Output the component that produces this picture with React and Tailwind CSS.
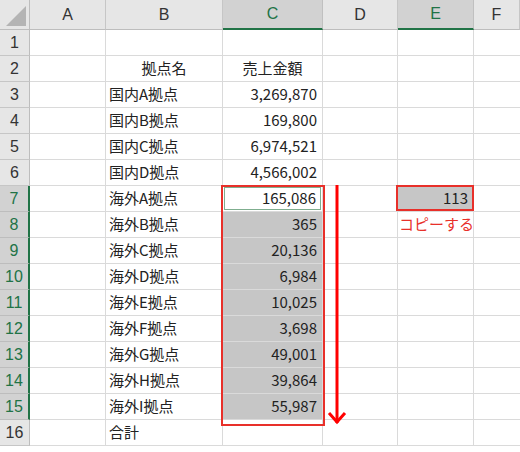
import React from "react";

const rows = [
  ["", ""],
  ["拠点名", "売上金額"],
  ["国内A拠点", "3,269,870"],
  ["国内B拠点", "169,800"],
  ["国内C拠点", "6,974,521"],
  ["国内D拠点", "4,566,002"],
  ["海外A拠点", "165,086"],
  ["海外B拠点", "365"],
  ["海外C拠点", "20,136"],
  ["海外D拠点", "6,984"],
  ["海外E拠点", "10,025"],
  ["海外F拠点", "3,698"],
  ["海外G拠点", "49,001"],
  ["海外H拠点", "39,864"],
  ["海外I拠点", "55,987"],
  ["合計", ""],
];

const font = { fontFamily: '"Noto Sans CJK JP", "Liberation Sans", sans-serif' };

function CCell({ n, value }) {
  if (n === 2) {
    return <div className="flex items-center justify-center border-r border-b border-[#dadada]">{value}</div>;
  }
  if (n === 7) {
    return (
      <div className="flex p-px border-r border-b border-[#dadada]">
        <div className="flex-1 flex items-center justify-end pr-[4px] border border-[#7fae8f] bg-white">{value}</div>
      </div>
    );
  }
  const sel = n >= 8 && n <= 15;
  return (
    <div
      className={
        sel
          ? "flex items-center justify-end pr-[5px] bg-[#c6c6c6] border-r border-b border-[#dadada]"
          : "flex items-center justify-end pr-[5px] border-r border-b border-[#dadada]"
      }
    >
      {value}
    </div>
  );
}

function ECell({ n }) {
  if (n === 7) {
    return (
      <div className="flex items-center justify-end pr-[5px] bg-[#c6c6c6] border-r border-b border-[#dadada]">113</div>
    );
  }
  if (n === 8) {
    return (
      <div className="flex items-center pl-[1px] whitespace-nowrap text-[#e8302a] border-r border-b border-[#dadada]">
        コピーする
      </div>
    );
  }
  return <div className="border-r border-b border-[#dadada]" />;
}

export default function App() {
  return (
    <div className="relative w-[520px] h-[452px] overflow-hidden bg-white text-[15px] text-[#222]" style={font}>
      <div className="grid grid-cols-[30px_76px_117px_100px_75px_76px_1fr] grid-rows-[30px_repeat(17,26px)]">
        {/* header */}
        <div className="flex items-end justify-end p-[3px] bg-[#e6e6e6] border-r border-b border-[#bdbdbd]">
          <div className="w-0 h-0 border-l-[20px] border-l-transparent border-b-[20px] border-b-[#b4b4b4]" />
        </div>
        {["A", "B", "C", "D", "E", "F"].map((c) => {
          const sel = c === "C" || c === "E";
          return (
            <div
              key={c}
              className={
                sel
                  ? "flex items-center justify-center bg-[#d2d2d2] border-r border-r-[#c0c0c0] border-b-2 border-b-[#217346] text-[#217346] text-[16px]"
                  : "flex items-center justify-center bg-[#e6e6e6] border-r border-r-[#c6c6c6] border-b border-b-[#bdbdbd] text-[#333] text-[16px]"
              }
              style={{ fontFamily: '"Liberation Sans", sans-serif' }}
            >
              {c}
            </div>
          );
        })}
        {rows.map((r, i) => {
          const n = i + 1;
          const sel = n >= 7 && n <= 15;
          return (
            <React.Fragment key={n}>
              <div
                className={
                  sel
                    ? "flex items-center justify-center bg-[#d2d2d2] border-r-2 border-r-[#217346] border-b border-b-[#bdbdbd] text-[#217346] text-[16px]"
                    : "flex items-center justify-center bg-[#e6e6e6] border-r border-r-[#bdbdbd] border-b border-b-[#c6c6c6] text-[#333] text-[16px]"
                }
                style={{ fontFamily: '"Liberation Sans", sans-serif' }}
              >
                {n}
              </div>
              <div className="border-r border-b border-[#dadada]" />
              <div
                className={
                  n === 2
                    ? "flex items-center justify-center border-r border-b border-[#dadada]"
                    : "flex items-center pl-[3px] border-r border-b border-[#dadada]"
                }
              >
                {r[0]}
              </div>
              <CCell n={n} value={r[1]} />
              <div className="border-r border-b border-[#dadada]" />
              <ECell n={n} />
              <div className="border-b border-[#dadada]" />
            </React.Fragment>
          );
        })}
      </div>

      {/* red box C7:C15 (overlay) */}
      <div className="absolute left-[221px] top-[185px] w-[104px] h-[241px] border-2 border-[#e8302a]" />

      {/* red box E7 (overlay) */}
      <div className="absolute left-[396px] top-[185px] w-[78px] h-[26px] border-2 border-[#e8302a]" />

      {/* arrow (overlay drawing) */}
      <svg className="absolute left-[325px] top-[185px]" width="24" height="242" viewBox="0 0 24 242">
        <line x1="12" y1="0" x2="12" y2="238" stroke="#ff0000" strokeWidth="3" />
        <polyline points="4,228 12,237 20,228" fill="none" stroke="#ff0000" strokeWidth="3" />
      </svg>
    </div>
  );
}
